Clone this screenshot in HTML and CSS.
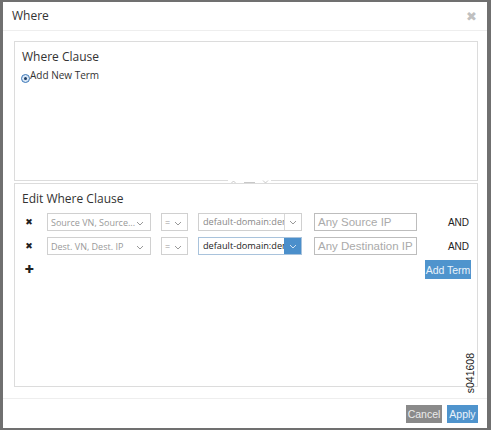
FILE: index.html
```html
<!DOCTYPE html>
<html>
<head>
<meta charset="utf-8">
<link rel="stylesheet" href="styles.css">
</head>
<body>
<div class="modal">
  <div class="header">
    <span class="title">Where</span>
    <span class="close">&#10006;</span>
  </div>
  <div class="body">
    <div class="panel top">
      <div class="heading">Where Clause</div>
      <div class="radio-row">
        <span class="radio"><span class="dot"></span></span>
        <span class="radio-label">Add New Term</span>
      </div>
    </div>
    <div class="divider">
      <span class="handle">
        <svg width="7" height="4" viewBox="0 0 7 4"><polyline points="1,3.5 3.5,1 6,3.5" fill="none" stroke="#bbb" stroke-width="0.8"/></svg>
        <span class="bar"></span>
        <svg width="7" height="4" viewBox="0 0 7 4"><polyline points="1,0.5 3.5,3 6,0.5" fill="none" stroke="#bbb" stroke-width="0.8"/></svg>
      </span>
    </div>
    <div class="panel bottom">
      <div class="heading">Edit Where Clause</div>
      <div class="row">
        <span class="del">&#10006;</span>
        <span class="sel s1"><span class="val">Source VN, Source...</span><svg class="chev" width="8" height="5" viewBox="0 0 8 5"><polyline points="1,1 4,4 7,1" fill="none" stroke="#999" stroke-width="1"/></svg></span>
        <span class="sel s2"><span class="val">=</span><svg class="chev" width="8" height="5" viewBox="0 0 8 5"><polyline points="1,1 4,4 7,1" fill="none" stroke="#999" stroke-width="1"/></svg></span>
        <span class="combo"><span class="cval">default-domain:den</span><span class="carrow"><svg width="8" height="5" viewBox="0 0 8 5"><polyline points="1,1 4,4 7,1" fill="none" stroke="#999" stroke-width="1"/></svg></span></span>
        <span class="inp">Any Source IP</span>
        <span class="and">AND</span>
      </div>
      <div class="row">
        <span class="del">&#10006;</span>
        <span class="sel s1"><span class="val">Dest. VN, Dest. IP</span><svg class="chev" width="8" height="5" viewBox="0 0 8 5"><polyline points="1,1 4,4 7,1" fill="none" stroke="#999" stroke-width="1"/></svg></span>
        <span class="sel s2"><span class="val">=</span><svg class="chev" width="8" height="5" viewBox="0 0 8 5"><polyline points="1,1 4,4 7,1" fill="none" stroke="#999" stroke-width="1"/></svg></span>
        <span class="combo active"><span class="cval">default-domain:den</span><span class="carrow"><svg width="8" height="5" viewBox="0 0 8 5"><polyline points="1,1 4,4 7,1" fill="none" stroke="#cfe0f0" stroke-width="1"/></svg></span></span>
        <span class="inp">Any Destination IP</span>
        <span class="and">AND</span>
      </div>
      <div class="row last">
        <span class="add">&#10010;</span>
        <span class="spacer"></span>
        <span class="btn blue addterm">Add Term</span>
      </div>
      <div class="stamp-wrap"><span class="stamp">s041608</span></div>
    </div>
  </div>
  <div class="footer">
    <span class="btn gray">Cancel</span>
    <span class="btn blue">Apply</span>
  </div>
</div>
</body>
</html>
```
FILE: styles.css
```css
html, body {
  margin: 0;
  padding: 0;
  background: #707070;
  width: 491px;
  height: 430px;
  overflow: hidden;
}
.modal {
  margin: 2px 4px 0 3px;
  height: 426px;
  background: #fff;
  display: flex;
  flex-direction: column;
  font-family: "Open Sans", sans-serif;
  color: #333;
}
.header {
  height: 28px;
  border-bottom: 1px solid #eeeeee;
  display: flex;
  align-items: center;
  justify-content: space-between;
  padding: 0 10px 0 9px;
}
.title {
  font-size: 12px;
  margin-top: -1px;
}
.close {
  color: #c0c0c0;
  font-size: 13px;
  font-family: "DejaVu Sans", sans-serif;
  font-weight: bold;
}
.body {
  flex: 1;
  padding: 10px 9px 11px 11px;
  display: flex;
  flex-direction: column;
  border-bottom: 1px solid #eeeeee;
}
.panel {
  border: 1px solid #dcdcdc;
  padding: 6px 7px;
}
.panel.top {
  height: 126px;
}
.panel.bottom {
  flex: 1;
  padding-top: 7px;
  display: flex;
  flex-direction: column;
}
.heading {
  font-size: 12px;
  line-height: 16px;
  color: #333;
}
.panel.top .heading {
  margin-top: 1px;
}
.radio-row {
  display: flex;
  align-items: flex-start;
  margin-top: 4px;
  margin-left: -1px;
}
.radio {
  width: 7px;
  height: 7px;
  border: 1px solid #3d78b8;
  border-radius: 50%;
  background: #d8e6f5;
  display: flex;
  align-items: center;
  justify-content: center;
  margin-top: 5px;
}
.dot {
  width: 3px;
  height: 3px;
  border-radius: 50%;
  background: #1f3f66;
}
.radio-label {
  font-size: 10px;
  line-height: 13px;
  color: #333;
}
.divider {
  height: 2px;
  display: flex;
  align-items: center;
  justify-content: center;
}
.handle {
  display: flex;
  align-items: center;
  gap: 2px;
  background: #fff;
  padding: 0 2px;
  margin-left: 6px;
}
.bar {
  width: 11px;
  height: 1px;
  background: #c8c8c8;
  margin: 0 5px;
}
.row {
  display: flex;
  align-items: center;
  height: 18px;
  margin-top: 6px;
}
.heading + .row {
  margin-top: 6px;
}
.del {
  width: 14px;
  text-align: center;
  font-family: "DejaVu Sans", sans-serif;
  font-weight: bold;
  font-size: 9px;
  color: #222;
}
.add {
  width: 14px;
  text-align: center;
  font-family: "DejaVu Sans", sans-serif;
  font-size: 11px;
  color: #222;
  align-self: flex-start;
  margin-top: 3px;
}
.sel {
  box-sizing: border-box;
  height: 18px;
  border: 1px solid #d0d0d0;
  display: flex;
  align-items: center;
  justify-content: space-between;
  padding: 0 6px 0 3px;
  font-size: 9px;
  color: #999;
  white-space: nowrap;
  overflow: hidden;
}
.s1 {
  width: 104px;
  margin-left: 11px;
}
.s2 {
  width: 27px;
  margin-left: 10px;
  padding-right: 5px;
}
.chev {
  flex: none;
  margin-top: 2px;
}
.combo {
  box-sizing: border-box;
  width: 104px;
  height: 18px;
  margin-left: 10px;
  border: 1px solid #d0d0d0;
  display: flex;
  overflow: hidden;
}
.cval {
  flex: 1;
  overflow: hidden;
  white-space: nowrap;
  font-size: 9.2px;
  color: #888;
  padding-left: 4px;
  line-height: 16px;
}
.carrow {
  width: 16px;
  flex: none;
  border-left: 1px solid #d8d8d8;
  display: flex;
  align-items: center;
  justify-content: center;
}
.combo.active {
  border-color: #a9c3dc;
}
.combo.active .cval {
  color: #222;
}
.combo.active .carrow {
  background: #4b8fcb;
  border-left-color: #4b8fcb;
}
.inp {
  box-sizing: border-box;
  width: 103px;
  height: 18px;
  margin-left: 12px;
  border: 1px solid #bdbdbd;
  font-family: "Liberation Sans", Arial, sans-serif;
  font-size: 11.5px;
  color: #aaa;
  padding-left: 3px;
  line-height: 16px;
  white-space: nowrap;
  overflow: hidden;
}
.and {
  flex: 1;
  text-align: right;
  font-family: "Liberation Sans", Arial, sans-serif;
  font-size: 10px;
  color: #222;
  padding-right: 1px;
}
.row.last {
  margin-top: 5px;
  height: 19px;
}
.spacer {
  flex: 1;
}
.btn {
  box-sizing: border-box;
  display: inline-flex;
  align-items: center;
  justify-content: center;
  font-family: "Liberation Sans", Arial, sans-serif;
  font-size: 10.5px;
  color: #fff;
  height: 18px;
}
.blue {
  background: #4f94cd;
  color: #eaf3fb;
}
.gray {
  background: #8a8a8a;
  color: #ececec;
}
.addterm {
  width: 46px;
  height: 19px;
  margin-right: -1px;
}
.stamp-wrap {
  flex: 1;
  display: flex;
  justify-content: flex-end;
  align-items: flex-end;
}
.stamp {
  writing-mode: vertical-rl;
  transform: rotate(180deg);
  font-family: "Liberation Sans", Arial, sans-serif;
  font-size: 10.5px;
  color: #222;
  margin-right: -6px;
  margin-bottom: -13px;
  line-height: 11px;
}
.footer {
  height: 29px;
  display: flex;
  align-items: center;
  justify-content: flex-end;
  gap: 5px;
  padding: 0 9px 0 0;
}
.footer .gray {
  width: 36px;
}
.footer .blue {
  width: 31px;
}
```
